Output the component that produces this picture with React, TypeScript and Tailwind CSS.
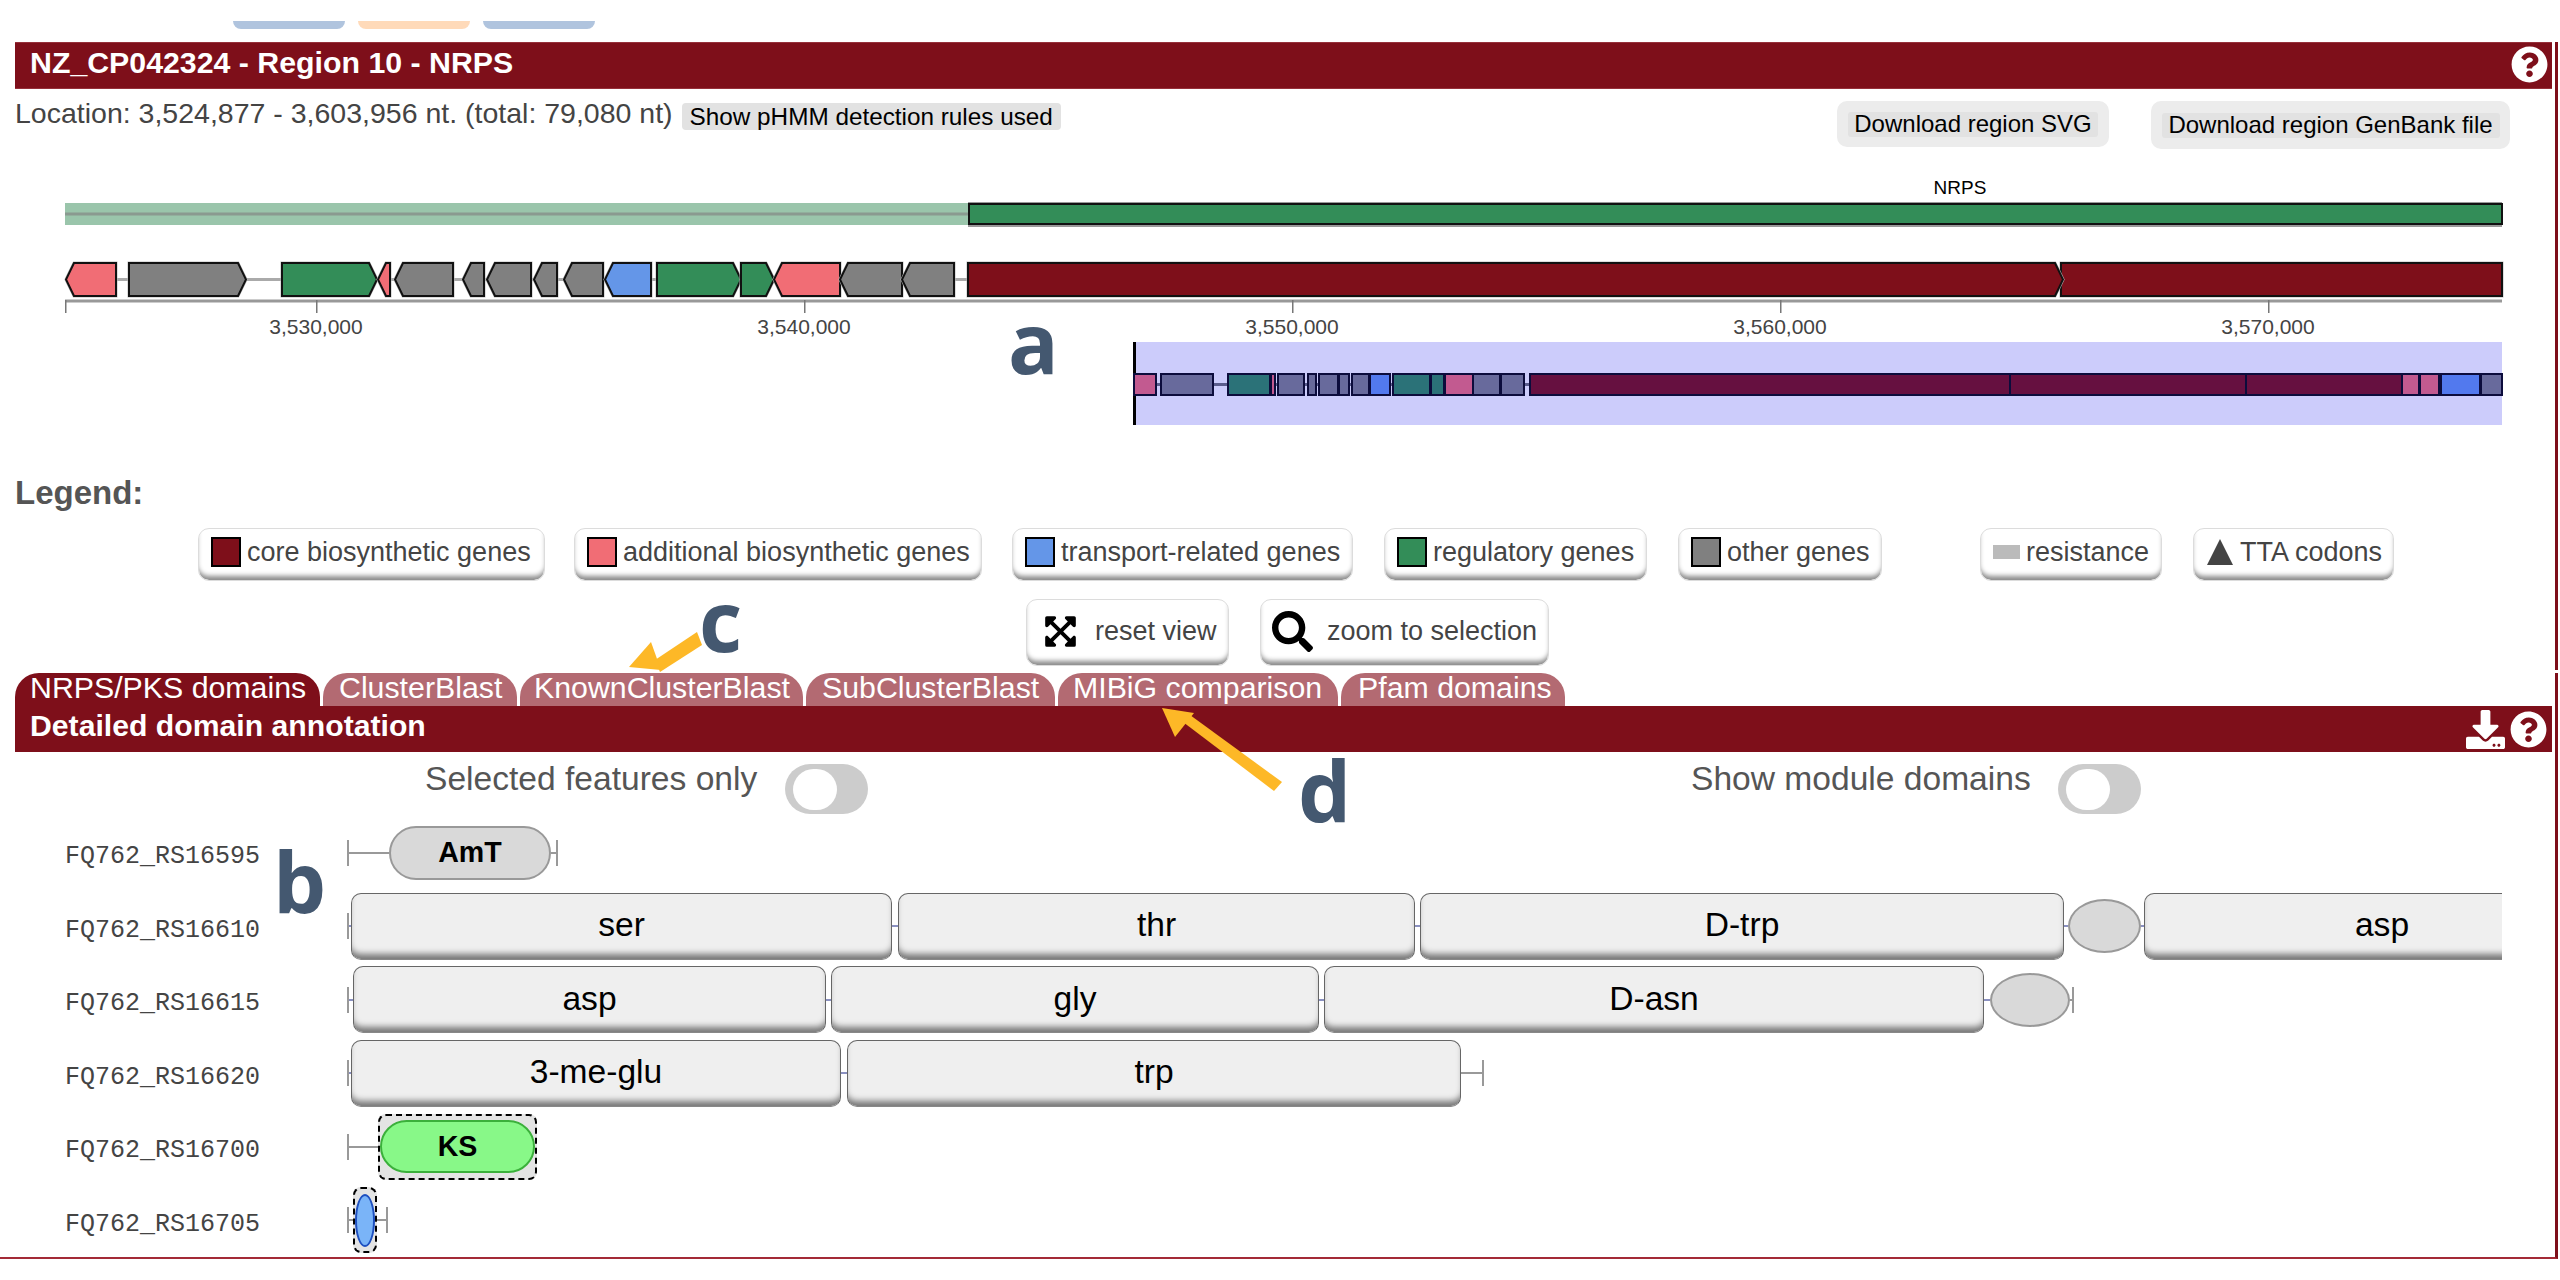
import type { ReactNode } from 'react';
import { FaDownload, FaExpandArrowsAlt, FaQuestionCircle, FaSearch } from 'react-icons/fa';

const RED = '#7e0f1a';
const PINK = '#f16d75';
const GREY = '#808080';
const GREEN = '#338d58';
const BLUE = '#6496e8';

// x1, x2, direction, colour: the genes of the region in page pixels
const GENES: [number, number, 'l' | 'r' | 'n', string][] = [
  [66, 116, 'l', PINK],
  [129, 246, 'r', GREY],
  [282, 377, 'r', GREEN],
  [378, 390, 'l', PINK],
  [395, 453, 'l', GREY],
  [463, 484, 'l', GREY],
  [487, 531, 'l', GREY],
  [534, 557, 'l', GREY],
  [564, 603, 'l', GREY],
  [605, 651, 'l', BLUE],
  [657, 741, 'r', GREEN],
  [741, 774, 'r', GREEN],
  [774, 840, 'l', PINK],
  [840, 902, 'l', GREY],
  [902, 954, 'l', GREY],
  [2061, 2502, 'n', RED],
  [968, 2063, 'r', RED],
];

// same idea for the zoomed selection strip
const S_PINK = '#c25a90';
const S_GREY = '#686a9c';
const S_TEAL = '#2b7278';
const S_BLUE = '#5279ee';
const S_RED = '#661040';
const STRIP: [number, number, string][] = [
  [1134, 1156, S_PINK],
  [1161, 1213, S_GREY],
  [1228, 1270, S_TEAL],
  [1271, 1275, S_PINK],
  [1278, 1304, S_GREY],
  [1308, 1316, S_GREY],
  [1319, 1338, S_GREY],
  [1339, 1349, S_GREY],
  [1352, 1369, S_GREY],
  [1370, 1390, S_BLUE],
  [1393, 1430, S_TEAL],
  [1431, 1444, S_TEAL],
  [1445, 1473, S_PINK],
  [1473, 1500, S_GREY],
  [1501, 1524, S_GREY],
  [1530, 2010, S_RED],
  [2010, 2246, S_RED],
  [2246, 2402, S_RED],
  [2402, 2419, S_PINK],
  [2420, 2439, S_PINK],
  [2441, 2480, S_BLUE],
  [2481, 2502, S_GREY],
];

const TICKS = [
  [316, '3,530,000'],
  [804, '3,540,000'],
  [1292, '3,550,000'],
  [1780, '3,560,000'],
  [2268, '3,570,000'],
] as const;

function genePoints(x1: number, x2: number, dir: 'l' | 'r' | 'n') {
  const top = 263;
  const bottom = 296;
  const mid = 279.5;
  const head = Math.min(8, x2 - x1);
  if (dir === 'r') return `${x1},${top} ${x2 - head},${top} ${x2},${mid} ${x2 - head},${bottom} ${x1},${bottom}`;
  if (dir === 'l') return `${x1 + head},${top} ${x2},${top} ${x2},${bottom} ${x1 + head},${bottom} ${x1},${mid}`;
  return `${x1},${top} ${x2},${top} ${x2},${bottom} ${x1},${bottom}`;
}

function RegionMap() {
  return (
    <svg viewBox="15 170 2537 260" className="block w-[2537px] h-[260px]">
      <text x="1960" y="194" textAnchor="middle" fontSize="19" fill="#000">
        NRPS
      </text>
      <rect x="65" y="203" width="903" height="22" fill="#9ac5ab" />
      <rect x="65" y="212.5" width="903" height="3" fill="#8a9a90" />
      <rect x="968" y="202" width="1534" height="25" fill="#999" />
      <rect x="969" y="204" width="1533" height="20" fill={GREEN} stroke="#111" strokeWidth="2" />

      <rect x="65" y="278" width="1000" height="3" fill="#aaa" />
      {GENES.map(([x1, x2, dir, fill], i) => (
        <g key={i}>
          <polygon points={genePoints(x1, x2, dir)} fill="none" stroke="#bbb" strokeWidth="3" />
          <polygon points={genePoints(x1, x2, dir)} fill={fill} stroke="#111" strokeWidth="2" />
        </g>
      ))}

      <rect x="65" y="299.5" width="2437" height="3" fill="#999" />
      <rect x="65" y="300" width="1.5" height="13" fill="#777" />
      {TICKS.map(([x, label]) => (
        <g key={label}>
          <rect x={x} y="300" width="1.5" height="13" fill="#777" />
          <text x={x} y="334" textAnchor="middle" fontSize="21" fill="#444">
            {label}
          </text>
        </g>
      ))}

      <rect x="1135" y="342" width="1367" height="83" fill="#ccccfb" />
      <rect x="1133" y="342" width="3" height="83" fill="#000" />
      <rect x="1134" y="383" width="396" height="3" fill="#5a5c8c" />
      {STRIP.map(([x1, x2, fill], i) => (
        <rect key={i} x={x1} y="374" width={x2 - x1} height="21" fill={fill} stroke="#0c0c3c" strokeWidth="2" />
      ))}
    </svg>
  );
}

function LegendButton({ className, children }: { className: string; children: ReactNode }) {
  return (
    <div
      className={`flex items-center rounded-[11px] bg-white border border-[#dcdcdc] shadow-[inset_0_-6px_5px_-2px_#8a8a8a] text-[27px] text-[#444] ${className}`}
    >
      {children}
    </div>
  );
}

function Swatch({ className }: { className: string }) {
  return <span className={`w-[30px] h-[30px] mr-[6px] border-2 border-black ${className}`} />;
}

function Tab({ className, children }: { className: string; children: ReactNode }) {
  return (
    <div
      className={`h-[33px] rounded-t-[24px] text-white text-[30.3px] leading-[29px] whitespace-nowrap ${className}`}
    >
      {children}
    </div>
  );
}

function Toggle() {
  return (
    <div className="flex items-center w-[83px] h-[50px] mt-[12px] pl-[8px] rounded-full bg-[#ccc]">
      <span className="w-[44px] h-[41px] rounded-full bg-white" />
    </div>
  );
}

function Cap({ className = 'h-[26px]' }: { className?: string }) {
  return <span className={`w-[2px] shrink-0 bg-[#999] ${className}`} />;
}

function Line({ className, color = 'bg-[#999]' }: { className: string; color?: string }) {
  return <span className={`h-[2px] shrink-0 ${color} ${className}`} />;
}

function Link({ className }: { className: string }) {
  return <Line className={className} color="bg-[#8a90c0]" />;
}

function Box({ className, children }: { className: string; children: ReactNode }) {
  return (
    <div
      className={`flex items-center justify-center h-[67px] shrink-0 pb-[2px] rounded-[10px] bg-[#efefef] border-[1.5px] border-[#666] border-b-[#888] shadow-[inset_0_-8px_6px_-3px_#777] text-[33.6px] text-black ${className}`}
    >
      {children}
    </div>
  );
}

function Circle({ className }: { className: string }) {
  return <span className={`h-[54px] shrink-0 rounded-[50%] bg-[#d9d9d9] border-2 border-[#999] ${className}`} />;
}

function Row({ label, children }: { label: string; children: ReactNode }) {
  return (
    <div className="flex items-center h-[73.5px] w-[2502px] overflow-hidden">
      <div className="w-[347px] shrink-0 pl-[65px] pt-[8px] font-['Liberation_Mono',monospace] text-[25px] text-[#444]">
        {label}
      </div>
      {children}
    </div>
  );
}

export default function App() {
  return (
    <div className="relative w-[2560px] h-[1280px] overflow-hidden bg-white font-['Liberation_Sans',Arial,sans-serif]">
      {/* cut-off tab stubs at the very top */}
      <div className="flex gap-[13px] h-[42px] pt-[21px] pl-[233px]">
        <div className="w-[112px] h-[8px] rounded-b-[12px] bg-[#b0c4de]" />
        <div className="w-[112px] h-[8px] rounded-b-[12px] bg-[#ffdab9]" />
        <div className="w-[112px] h-[8px] rounded-b-[12px] bg-[#b0c4de]" />
      </div>

      {/* Region overview */}
      <section className="w-[2558px] h-[628px] pl-[15px] pr-[3px] border-r-[3px] border-[#7e0f1a]">
        <div className="flex items-center justify-between h-[47px] pl-[15px] pr-[4px] border-y border-[#96303a] bg-[#7e0f1a] text-white font-bold text-[30.3px]">
          <span className="pb-[5px]">NZ_CP042324 - Region 10 - NRPS</span>
          <FaQuestionCircle className="w-[37px] h-[37px] mb-[3px]" />
        </div>

        <div className="flex items-start h-[81px]">
          <span className="mt-[7px] text-[28.5px] leading-[34px] text-[#444]">
            Location: 3,524,877 - 3,603,956 nt. (total: 79,080 nt)
          </span>
          <button className="ml-[9px] mt-[14px] h-[27px] px-[8px] rounded-[4px] bg-[#e2e2e2] text-[24.3px] leading-[27px] text-black whitespace-nowrap">
            Show pHMM detection rules used
          </button>
          <div className="ml-auto mt-[12px] flex items-center justify-center w-[272px] h-[46px] rounded-[10px] bg-[#ececec]">
            <span className="flex items-center justify-center w-[250px] h-[25px] rounded-[3px] bg-[#e2e2e2] text-[24px] text-black whitespace-nowrap">
              Download region SVG
            </span>
          </div>
          <div className="ml-[42px] mr-[42px] mt-[12px] flex items-center justify-center w-[359px] h-[48px] rounded-[10px] bg-[#ececec]">
            <span className="flex items-center justify-center w-[338px] h-[25px] rounded-[3px] bg-[#e2e2e2] text-[24px] text-black whitespace-nowrap">
              Download region GenBank file
            </span>
          </div>
        </div>

        <RegionMap />

        <div className="mt-[43px] mb-[2px] h-[40px] font-bold text-[33px] leading-[40px] text-[#555]">Legend:</div>

        <div className="flex mt-[15px] ml-[183px]">
          <LegendButton className="h-[53px] pb-[5px] w-[347px] pl-[12px]">
            <Swatch className="bg-[#7e0f1a]" />
            core biosynthetic genes
          </LegendButton>
          <LegendButton className="h-[53px] pb-[5px] w-[408px] ml-[29px] pl-[12px]">
            <Swatch className="bg-[#f16d75]" />
            additional biosynthetic genes
          </LegendButton>
          <LegendButton className="h-[53px] pb-[5px] w-[341px] ml-[30px] pl-[12px]">
            <Swatch className="bg-[#6496e8]" />
            transport-related genes
          </LegendButton>
          <LegendButton className="h-[53px] pb-[5px] w-[263px] ml-[31px] pl-[12px]">
            <Swatch className="bg-[#338d58]" />
            regulatory genes
          </LegendButton>
          <LegendButton className="h-[53px] pb-[5px] w-[204px] ml-[31px] pl-[12px]">
            <Swatch className="bg-[#808080]" />
            other genes
          </LegendButton>
          <LegendButton className="h-[53px] pb-[5px] w-[182px] ml-[98px] pl-[12px]">
            <span className="w-[27px] h-[14px] mr-[6px] bg-[#bbb]" />
            resistance
          </LegendButton>
          <LegendButton className="h-[53px] pb-[5px] w-[201px] ml-[31px] pl-[13px]">
            <svg viewBox="0 0 26 26" className="w-[26px] h-[26px] mr-[7px]">
              <polygon points="13,0 26,26 0,26" fill="#444" />
            </svg>
            TTA codons
          </LegendButton>
        </div>

        <div className="flex mt-[18px] ml-[1011px]">
          <LegendButton className="w-[203px] h-[67px] pb-[3px] pl-[16px] gap-[17px]">
            <FaExpandArrowsAlt className="w-[35px] h-[35px] text-black" />
            reset view
          </LegendButton>
          <LegendButton className="w-[289px] h-[67px] pb-[3px] ml-[31px] pl-[11px] gap-[14px]">
            <FaSearch className="w-[41px] h-[41px] text-black" />
            zoom to selection
          </LegendButton>
        </div>
      </section>

      {/* Detail panel */}
      <section className="w-[2558px] h-[586px] mt-[3px] border-r-[3px] border-b-2 border-r-[#7e0f1a] border-b-[#a32a36]">
        <div className="flex gap-[3px] ml-[15px]">
          <Tab className="w-[305px] pl-[15px] bg-[#7e0f1a]">NRPS/PKS domains</Tab>
          <Tab className="w-[194px] pl-[16px] bg-[#b36a72]">ClusterBlast</Tab>
          <Tab className="w-[283px] pl-[14px] bg-[#b36a72]">KnownClusterBlast</Tab>
          <Tab className="w-[249px] pl-[16px] bg-[#b36a72]">SubClusterBlast</Tab>
          <Tab className="w-[280px] pl-[15px] bg-[#b36a72]">MIBiG comparison</Tab>
          <Tab className="w-[224px] pl-[17px] bg-[#b36a72]">Pfam domains</Tab>
        </div>

        <div className="flex items-center justify-between h-[46px] w-[2537px] ml-[15px] pl-[15px] pr-[5px] bg-[#7e0f1a] text-white font-bold text-[30.2px]">
          <span className="pb-[6px]">Detailed domain annotation</span>
          <span className="flex items-center gap-[5px]">
            <FaDownload className="w-[39px] h-[39px]" />
            <FaQuestionCircle className="w-[37px] h-[37px]" />
          </span>
        </div>

        <div className="flex items-start h-[64px] text-[33.6px] leading-[40px] text-[#555]">
          <span className="ml-[425px] mt-[7px] w-[334px] whitespace-nowrap">Selected features only</span>
          <span className="ml-[26px]">
            <Toggle />
          </span>
          <span className="ml-[823px] mt-[7px] w-[340px] whitespace-nowrap">Show module domains</span>
          <span className="ml-[27px]">
            <Toggle />
          </span>
        </div>

        <Row label="FQ762_RS16595">
          <Cap />
          <Line className="w-[40px]" />
          <div className="flex items-center justify-center w-[162px] h-[54px] shrink-0 rounded-[27px] bg-[#d9d9d9] border-2 border-[#999] font-bold text-[28.6px] text-black">
            AmT
          </div>
          <Line className="w-[5px]" />
          <Cap />
        </Row>
        <Row label="FQ762_RS16610">
          <Cap />
          <Link className="w-[2px]" />
          <Box className="w-[541px]">ser</Box>
          <Link className="w-[6px]" />
          <Box className="w-[517px]">thr</Box>
          <Link className="w-[5px]" />
          <Box className="w-[644px]">D-trp</Box>
          <Link className="w-[4px]" />
          <Circle className="w-[73px]" />
          <Link className="w-[3px]" />
          <Box className="w-[476px]">asp</Box>
        </Row>
        <Row label="FQ762_RS16615">
          <Cap />
          <Link className="w-[4px]" />
          <Box className="w-[473px]">asp</Box>
          <Link className="w-[5px]" />
          <Box className="w-[488px]">gly</Box>
          <Link className="w-[5px]" />
          <Box className="w-[660px]">D-asn</Box>
          <Link className="w-[6px]" />
          <Circle className="w-[80px]" />
          <Line className="w-[2px]" />
          <Cap />
        </Row>
        <Row label="FQ762_RS16620">
          <Cap />
          <Link className="w-[2px]" />
          <Box className="w-[490px]">3-me-glu</Box>
          <Link className="w-[6px]" />
          <Box className="w-[614px]">trp</Box>
          <Line className="w-[21px]" />
          <Cap />
        </Row>
        <Row label="FQ762_RS16700">
          <Cap />
          <Line className="w-[29px]" />
          <div className="flex items-center w-[159px] h-[66px] shrink-0 rounded-[8px] border-2 border-dashed border-black bg-[#e4e4e4]">
            <div className="flex items-center justify-center w-full h-[53px] rounded-[27px] bg-[#88f888] border-2 border-[#3bb03b] font-bold text-[28.6px] text-black">
              KS
            </div>
          </div>
        </Row>
        <Row label="FQ762_RS16705">
          <Cap />
          <Line className="w-[4px]" />
          <div className="flex items-center w-[24px] h-[66px] shrink-0 rounded-[8px] border-2 border-dashed border-black bg-[#e4e4e4]">
            <div className="w-full h-[53px] rounded-[50%] bg-[#7ab4f8] border-2 border-[#1d4fc0]" />
          </div>
          <Line className="w-[9px]" />
          <Cap />
        </Row>
      </section>

      {/* annotation letters and arrows drawn over the screenshot */}
      <span className="absolute left-[1008px] top-[287px] font-['Open_Sans',sans-serif] font-bold text-[84px] leading-[110px] text-[#445870]">
        a
      </span>
      <span className="absolute left-[273px] top-[826px] font-['Open_Sans',sans-serif] font-bold text-[84px] leading-[110px] text-[#445870]">
        b
      </span>
      <span className="absolute left-[699px] top-[565px] font-['Open_Sans',sans-serif] font-bold text-[84px] leading-[110px] text-[#445870]">
        c
      </span>
      <span className="absolute left-[1298px] top-[735px] font-['Open_Sans',sans-serif] font-bold text-[84px] leading-[110px] text-[#445870]">
        d
      </span>
      <svg viewBox="0 0 2560 1280" className="absolute left-0 top-0 w-[2560px] h-[1280px] pointer-events-none">
        <polygon points="697,632 702,645 660,672 655,660" fill="#fdb827" />
        <polygon points="651,642 629,667 661,670" fill="#fdb827" />
        <polygon points="1282,782 1274,791 1183,722 1190,715" fill="#fdb827" />
        <polygon points="1162,708 1194,713 1175,737" fill="#fdb827" />
      </svg>
    </div>
  );
}
